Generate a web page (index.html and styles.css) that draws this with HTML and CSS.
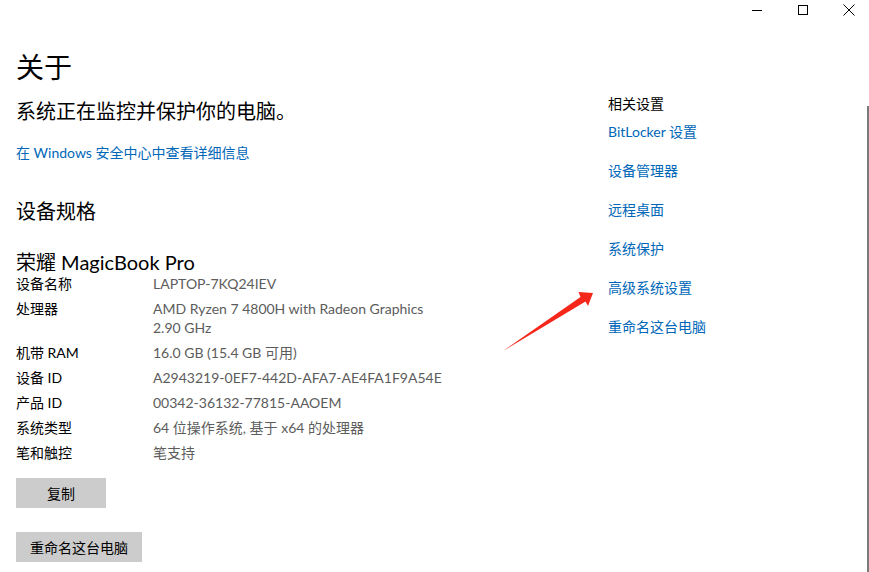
FILE: index.html
```html
<!DOCTYPE html>
<html lang="zh-CN">
<head>
<meta charset="utf-8">
<title>关于</title>
<link rel="stylesheet" href="styles.css">
</head>
<body>
<div class="window">
  <div class="titlebar">
    <div class="ctrl" aria-label="最小化">
      <svg width="10" height="10" viewBox="0 0 10 10"><path d="M0 5.5H10" stroke="#000" stroke-width="1"/></svg>
    </div>
    <div class="ctrl" aria-label="最大化">
      <svg width="10" height="10" viewBox="0 0 10 10"><rect x="0.5" y="0.5" width="9" height="9" fill="none" stroke="#000" stroke-width="1"/></svg>
    </div>
    <div class="ctrl" aria-label="关闭">
      <svg width="12" height="12" viewBox="0 0 12 12"><path d="M0.5 0.5L11.5 11.5M11.5 0.5L0.5 11.5" stroke="#000" stroke-width="1"/></svg>
    </div>
  </div>
  <div class="main">
    <div class="left">
      <h1 class="title">关于</h1>
      <p class="status">系统正在监控并保护你的电脑。</p>
      <a class="link">在 Windows 安全中心中查看详细信息</a>
      <h2 class="section">设备规格</h2>
      <div class="device">荣耀 MagicBook Pro</div>
      <div class="specs">
        <div class="row"><span class="label">设备名称</span><span class="value">LAPTOP-7KQ24IEV</span></div>
        <div class="row"><span class="label">处理器</span><span class="value">AMD Ryzen 7 4800H with Radeon Graphics<br>2.90 GHz</span></div>
        <div class="row"><span class="label">机带 RAM</span><span class="value">16.0 GB (15.4 GB 可用)</span></div>
        <div class="row"><span class="label">设备 ID</span><span class="value">A2943219-0EF7-442D-AFA7-AE4FA1F9A54E</span></div>
        <div class="row"><span class="label">产品 ID</span><span class="value">00342-36132-77815-AAOEM</span></div>
        <div class="row"><span class="label">系统类型</span><span class="value">64 位操作系统, 基于 x64 的处理器</span></div>
        <div class="row"><span class="label">笔和触控</span><span class="value">笔支持</span></div>
      </div>
      <div class="btn btn-copy">复制</div>
      <div class="btn btn-rename">重命名这台电脑</div>
    </div>
    <div class="right">
      <div class="related">相关设置</div>
      <a class="rlink">BitLocker 设置</a>
      <a class="rlink">设备管理器</a>
      <a class="rlink">远程桌面</a>
      <a class="rlink">系统保护</a>
      <a class="rlink">高级系统设置</a>
      <a class="rlink">重命名这台电脑</a>
    </div>
  </div>
  <div class="scrollbar"></div>
  <svg class="arrow" width="100" height="70" viewBox="500 288 100 70">
    <polygon points="503,351 580.5,297 578.5,292 593,293 588,306 585.5,301.5" fill="#f5261a"/>
  </svg>
</div>
</body>
</html>
```

FILE: styles.css
```css
* { box-sizing: border-box; }
html, body { margin: 0; padding: 0; background: #fff; }
body {
  font-family: Lato, "Noto Sans CJK SC", sans-serif;
  color: #000;
  width: 869px;
  height: 572px;
  overflow: hidden;
}
.window { position: relative; width: 869px; height: 572px; }
.titlebar {
  display: flex;
  justify-content: flex-end;
  height: 49px;
  margin-right: -3px;
}
.ctrl {
  width: 46px;
  height: 20px;
  display: flex;
  align-items: center;
  justify-content: center;
}
.main { display: flex; }
.left { width: 608px; padding-left: 16px; }
.title {
  margin: 0;
  font-size: 28px;
  line-height: 36px;
  font-weight: 400;
}
.status {
  margin: 12px 0 0;
  font-size: 20px;
  line-height: 28px;
}
.link, .rlink {
  display: block;
  color: #0067b8;
  font-size: 14px;
  line-height: 20px;
  text-decoration: none;
}
.link { margin-top: 18px; }
.section {
  margin: 34px 0 0;
  font-size: 20px;
  line-height: 28px;
  font-weight: 400;
}
.device {
  margin-top: 26px;
  font-size: 20px;
  line-height: 22px;
}
.specs { font-size: 14px; }
.row {
  display: flex;
  padding: 1px 0 5px;
  line-height: 19px;
}
.label { width: 137px; flex: none; color: #000; }
.value { color: #5c5c5c; }
.btn {
  display: flex;
  align-items: center;
  justify-content: center;
  height: 30px;
  background: #cccccc;
  font-size: 14px;
  color: #000;
}
.btn-copy { width: 90px; margin-top: 11px; }
.btn-rename { width: 126px; margin-top: 24px; }
.right { padding-top: 45px; }
.related { font-size: 14px; line-height: 20px; color: #000; }
.rlink { margin-top: 19px; }
.related + .rlink { margin-top: 8px; }
.scrollbar {
  position: absolute;
  left: 867px;
  top: 106px;
  width: 2px;
  height: 466px;
  background: #7a7a7a;
}
.arrow { position: absolute; left: 500px; top: 288px; }
```
